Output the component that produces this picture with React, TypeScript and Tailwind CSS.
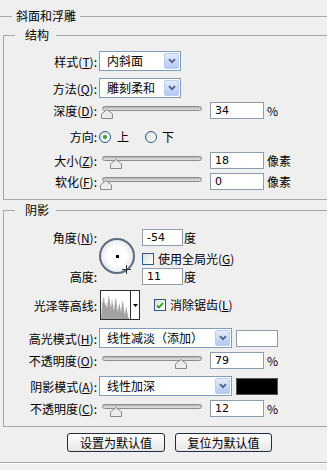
import React from 'react';

type Kids = { children?: React.ReactNode };

const Label = ({ children }: Kids) => (
  <div className="w-[93px] shrink-0 text-right whitespace-nowrap leading-[17px]">{children}</div>
);

const Key = ({ children }: Kids) => <span className="underline underline-offset-1">{children}</span>;

const Select = ({ value, width }: { value: string; width: string }) => (
  <div className={`ml-[2px] flex items-center h-[20px] bg-white border border-[#7f9db9] ${width}`}>
    <span className="flex-1 pl-[7px] leading-[18px] whitespace-nowrap">{value}</span>
    <div className="w-[15px] h-[16px] mr-[1px] rounded-[2px] border border-[#b9cbf1] bg-linear-to-b from-[#e3ebfd] to-[#b4c8f3] flex items-center justify-center">
      <svg width="8" height="6" viewBox="0 0 8 6">
        <path d="M1 1.2 L4 4.2 L7 1.2" stroke="#4d6185" strokeWidth="1.8" fill="none" />
      </svg>
    </div>
  </div>
);

const Slider = ({ pos }: { pos: number }) => (
  <div className="relative ml-[3px] w-[104px] h-[17px] shrink-0">
    <div className="absolute left-[2px] top-[4px] w-[100px] h-[5px] rounded-full border border-[#8c8c8c] bg-linear-to-b from-[#b4b4b4] to-[#e4e4e4]" />
    <svg className="absolute top-[7px]" style={{ left: pos }} width="12" height="10" viewBox="0 0 12 10">
      <polygon points="6,0.5 11.5,5 11.5,9.5 0.5,9.5 0.5,5" fill="#ececec" stroke="#8a8a8a" />
    </svg>
  </div>
);

const NumBox = ({ value, width = 'w-[54px]', className = '' }: { value: string; width?: string; className?: string }) => (
  <div
    className={`h-[17px] bg-white border border-[#8e9cb0] pl-[4px] leading-[15px] text-[11px] font-['DejaVu_Sans',sans-serif] ${width} ${className}`}
  >
    {value}
  </div>
);

const Radio = ({ checked = false, className = '' }: { checked?: boolean; className?: string }) => (
  <span
    className={`w-[12px] h-[12px] shrink-0 rounded-full border border-[#2a5a8a] bg-linear-to-br from-[#dcdcd6] to-white flex items-center justify-center ${className}`}
  >
    {checked && <span className="w-[4px] h-[4px] rounded-full bg-[#2fa52f]" />}
  </span>
);

const Check = ({ checked = false, className = '' }: { checked?: boolean; className?: string }) => (
  <span
    className={`w-[12px] h-[12px] shrink-0 border border-[#2a5a8a] bg-linear-to-br from-[#dcdcd6] to-white flex items-center justify-center ${className}`}
  >
    {checked && (
      <svg width="8" height="7" viewBox="0 0 8 7">
        <path d="M1 3.5 L3 5.5 L7 1" stroke="#21a121" strokeWidth="1.8" fill="none" />
      </svg>
    )}
  </span>
);

const SliderRow = ({ label, pos, value, unit, className }: { label: React.ReactNode; pos: number; value: string; unit: string; className: string }) => (
  <div className={`flex items-center h-[17px] ${className}`}>
    <Label>{label}</Label>
    <Slider pos={pos} />
    <NumBox value={value} className="ml-[6px]" />
    <span className="ml-[3px] leading-[17px]">{unit}</span>
  </div>
);

export default function App() {
  return (
    <div className="w-[327px] h-[470px] overflow-hidden bg-[#efefef] text-[12px] text-black font-['Noto_Sans_CJK_SC','Liberation_Sans',sans-serif]">
      {/* section title */}
      <div className="flex items-center h-[14px] mt-[9px]">
        <div className="w-[12px] h-px bg-[#a9a9a9]" />
        <span className="px-[4px] leading-[14px]">斜面和浮雕</span>
        <div className="flex-1 h-px bg-[#a9a9a9]" />
      </div>

      {/* 结构 */}
      <fieldset className="mt-[5px] ml-[3px] w-[340px] border border-[#a6a6a6] pb-[9px]">
        <legend className="ml-[11px] pl-[10px] pr-[7px] leading-[14px]">结构</legend>

        <div className="flex items-center h-[20px] mt-[9px]">
          <Label>
            样式(<Key>T</Key>):
          </Label>
          <Select value="内斜面" width="w-[82px]" />
        </div>
        <div className="flex items-center h-[20px] mt-[7px]">
          <Label>
            方法(<Key>Q</Key>):
          </Label>
          <Select value="雕刻柔和" width="w-[82px]" />
        </div>

        <SliderRow label={<>深度(<Key>D</Key>):</>} pos={1} value="34" unit="%" className="mt-[4px]" />

        <div className="flex items-center h-[17px] mt-[9px]">
          <Label>方向:</Label>
          <Radio checked className="ml-[2px]" />
          <span className="ml-[6px]">上</span>
          <Radio className="ml-[16px]" />
          <span className="ml-[5px]">下</span>
        </div>

        <SliderRow label={<>大小(<Key>Z</Key>):</>} pos={10} value="18" unit="像素" className="mt-[7px]" />
        <SliderRow label={<>软化(<Key>F</Key>):</>} pos={0} value="0" unit="像素" className="mt-[4px]" />
      </fieldset>

      {/* 阴影 */}
      <fieldset className="mt-[3px] ml-[3px] w-[340px] border border-[#a6a6a6] pb-[9px]">
        <legend className="ml-[11px] pl-[10px] pr-[7px] leading-[14px]">阴影</legend>

        <div className="flex mt-[12px] h-[56px]">
          <div className="w-[93px] shrink-0 flex flex-col justify-between text-right leading-[17px]">
            <div>
              角度(<Key>N</Key>):
            </div>
            <div>高度:</div>
          </div>
          <div className="relative ml-[2px] mt-[9px] w-[36px] h-[36px] rounded-full border-2 border-[#5f6d84] bg-radial from-white from-40% to-[#d4d6da]">
            <span className="absolute left-[15px] top-[15px] w-[3px] h-[3px] bg-black" />
            <svg className="absolute left-[21px] top-[25px]" width="9" height="9" viewBox="0 0 9 9">
              <path d="M4.5 0 V9 M0 4.5 H9" stroke="#333" strokeWidth="1" />
            </svg>
          </div>
          <div className="ml-[7px] flex flex-col">
            <div className="flex items-center">
              <NumBox value="-54" width="w-[41px]" />
              <span className="ml-[1px] leading-[17px]">度</span>
            </div>
            <div className="flex items-center h-[14px] mt-[6px]">
              <Check />
              <span className="ml-[4px] leading-[14px]">
                使用全局光(<Key>G</Key>)
              </span>
            </div>
            <div className="flex items-center mt-[2px]">
              <NumBox value="11" width="w-[41px]" />
              <span className="ml-[1px] leading-[17px]">度</span>
            </div>
          </div>
        </div>

        <div className="flex items-center h-[30px] mt-[5px]">
          <Label>光泽等高线:</Label>
          <div className="ml-[3px] w-[40px] h-[30px] border border-[#2e2e2e] bg-white flex">
            <svg width="29" height="28" viewBox="0 0 29 28">
              <polygon
                points="0,28 1,13 2,9 3,5 4,15 5,11 6,18 7,9 8,3 9,12 10,17 11,7 12,14 13,20 14,10 15,6 16,16 17,21 18,12 19,15 20,22 21,13 22,9 23,19 24,24 25,15 26,20 27,25 28,28"
                fill="#a3a3a3"
              />
            </svg>
            <div className="flex-1 border-l border-[#2e2e2e] flex items-center justify-center">
              <svg width="5" height="3" viewBox="0 0 5 3">
                <polygon points="0,0 5,0 2.5,3" fill="#000" />
              </svg>
            </div>
          </div>
          <Check checked className="ml-[14px]" />
          <span className="ml-[4px]">
            消除锯齿(<Key>L</Key>)
          </span>
        </div>

        <div className="flex items-center h-[20px] mt-[8px]">
          <Label>
            高光模式(<Key>H</Key>):
          </Label>
          <Select value="线性减淡（添加）" width="w-[133px]" />
          <div className="ml-[4px] w-[42px] h-[17px] bg-white border border-[#8e9cb0]" />
        </div>

        <SliderRow label={<>不透明度(<Key>O</Key>):</>} pos={75} value="79" unit="%" className="mt-[4px]" />

        <div className="flex items-center h-[20px] mt-[7px]">
          <Label>
            阴影模式(<Key>A</Key>):
          </Label>
          <Select value="线性加深" width="w-[133px]" />
          <div className="ml-[4px] w-[42px] h-[17px] bg-black border border-[#555]" />
        </div>

        <SliderRow label={<>不透明度(<Key>C</Key>):</>} pos={10} value="12" unit="%" className="mt-[4px]" />
      </fieldset>

      {/* buttons */}
      <div className="flex mt-[6px] ml-[67px]">
        <button className="w-[98px] h-[19px] rounded-[3px] border border-[#1f2d3d] bg-linear-to-b from-white to-[#e6e6e6] leading-[17px]">
          设置为默认值
        </button>
        <button className="ml-[10px] w-[97px] h-[19px] rounded-[3px] border border-[#1f2d3d] bg-linear-to-b from-white to-[#e6e6e6] leading-[17px]">
          复位为默认值
        </button>
      </div>

      <div className="mt-[10px] h-px bg-[#a6a6a6]" />
      <div className="h-px bg-white" />
    </div>
  );
}
